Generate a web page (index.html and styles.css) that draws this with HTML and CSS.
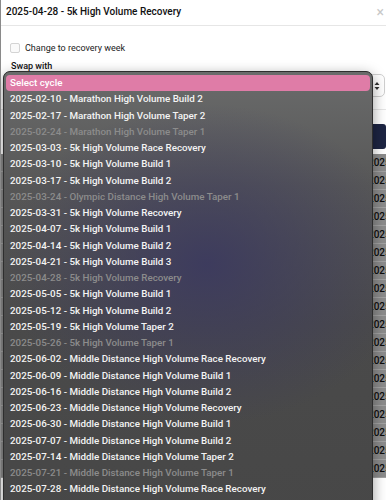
FILE: index.html
```html
<!DOCTYPE html>
<html lang="en">
<head>
  <meta charset="UTF-8">
  <meta name="viewport" content="width=device-width, initial-scale=1.0">
  <title>Edit week</title>
  <link rel="stylesheet" href="styles.css">
</head>
<body>

  <div class="modal">
    <!-- Header -->
    <div class="modal-header">
      <h1>2025-04-28 - 5k High Volume Recovery</h1>
      <span class="close">&times;</span>
    </div>

    <div class="modal-body">
      <label class="check-row">
        <span class="checkbox"></span>
        Change to recovery week
      </label>

      <div class="field-label">Swap with</div>
      <div class="select-box">
        <svg class="select-arrows" width="6" height="10" viewBox="0 0 6 10">
          <path d="M0.5 4 L3 1 L5.5 4 Z M0.5 6 L3 9 L5.5 6 Z" fill="#333"/>
        </svg>
      </div>

      <div class="divider"></div>
      <button class="save-btn">Save</button>

      <!-- Weeks table behind the popup -->
      <div class="weeks">
        <div class="week-row">2025-02-10</div>
        <div class="week-row">2025-02-17</div>
        <div class="week-row">2025-02-24</div>
        <div class="week-row">2025-03-03</div>
        <div class="week-row">2025-03-10</div>
        <div class="week-row">2025-03-17</div>
        <div class="week-row">2025-03-24</div>
        <div class="week-row">2025-03-31</div>
        <div class="week-row">2025-04-07</div>
        <div class="week-row">2025-04-14</div>
        <div class="week-row">2025-04-21</div>
        <div class="week-row">2025-04-28</div>
        <div class="week-row">2025-05-05</div>
        <div class="week-row">2025-05-12</div>
        <div class="week-row">2025-05-19</div>
        <div class="week-row">2025-05-26</div>
        <div class="week-row">2025-06-02</div>
        <div class="week-row">2025-06-09</div>
      </div>
    </div>

    <!-- Open native dropdown -->
    <ul class="dropdown">
      <li class="selected">Select cycle</li>
      <li>2025-02-10 - Marathon High Volume Build 2</li>
      <li>2025-02-17 - Marathon High Volume Taper 2</li>
      <li class="disabled">2025-02-24 - Marathon High Volume Taper 1</li>
      <li>2025-03-03 - 5k High Volume Race Recovery</li>
      <li>2025-03-10 - 5k High Volume Build 1</li>
      <li>2025-03-17 - 5k High Volume Build 2</li>
      <li class="disabled">2025-03-24 - Olympic Distance High Volume Taper 1</li>
      <li>2025-03-31 - 5k High Volume Recovery</li>
      <li>2025-04-07 - 5k High Volume Build 1</li>
      <li>2025-04-14 - 5k High Volume Build 2</li>
      <li>2025-04-21 - 5k High Volume Build 3</li>
      <li class="disabled">2025-04-28 - 5k High Volume Recovery</li>
      <li>2025-05-05 - 5k High Volume Build 1</li>
      <li>2025-05-12 - 5k High Volume Build 2</li>
      <li>2025-05-19 - 5k High Volume Taper 2</li>
      <li class="disabled">2025-05-26 - 5k High Volume Taper 1</li>
      <li>2025-06-02 - Middle Distance High Volume Race Recovery</li>
      <li>2025-06-09 - Middle Distance High Volume Build 1</li>
      <li>2025-06-16 - Middle Distance High Volume Build 2</li>
      <li>2025-06-23 - Middle Distance High Volume Recovery</li>
      <li>2025-06-30 - Middle Distance High Volume Build 1</li>
      <li>2025-07-07 - Middle Distance High Volume Build 2</li>
      <li>2025-07-14 - Middle Distance High Volume Taper 2</li>
      <li class="disabled">2025-07-21 - Middle Distance High Volume Taper 1</li>
      <li>2025-07-28 - Middle Distance High Volume Race Recovery</li>
    </ul>
  </div>

</body>
</html>
```

FILE: styles.css
```css
body {
  margin: 0;
  padding: 0;
  font-family: Roboto, "Liberation Sans", Arial, sans-serif;
  background-color: #fff;
  overflow: hidden;
}

.modal {
  position: relative;
  width: 386px;
  height: 500px;
  background-color: #fff;
  border-left: 1px solid #8a8a8a;
  box-sizing: border-box;
  overflow: hidden;
}

.modal-header {
  display: flex;
  justify-content: space-between;
  align-items: center;
  height: 23px;
  padding: 0 2px 2px 5px;
  border-bottom: 1px solid #e6e6e6;
}

.modal-header h1 {
  margin: 0;
  font-size: 10px;
  font-weight: 500;
  color: #111;
}

.close {
  font-size: 14px;
  color: #c8c8c8;
  line-height: 1;
}

.modal-body {
  padding: 15px 0 0 9px;
}

.check-row {
  display: flex;
  align-items: center;
  gap: 5px;
  font-size: 9px;
  color: #1a1a1a;
  height: 14px;
}

.checkbox {
  width: 8px;
  height: 8px;
  border: 1px solid #d4d4d4;
  border-radius: 2px;
  background-color: #fafafa;
}

.field-label {
  margin-top: 6px;
  margin-left: 1px;
  font-size: 9px;
  font-weight: 500;
  color: #111;
  height: 10px;
}

.select-box {
  display: flex;
  justify-content: flex-end;
  align-items: center;
  margin-top: 3px;
  height: 23px;
  border: 1px solid #d0d0d0;
  border-radius: 5px;
  padding: 0 4px 0 6px;
  box-sizing: border-box;
  margin-right: 1px;
}

.select-arrows {
  display: block;
}

.divider {
  margin: 12px 0 0 -9px;
  border-top: 1px solid #e6e6e6;
}

.save-btn {
  display: block;
  margin: 14px 0 0 auto;
  width: 60px;
  height: 25px;
  border: none;
  border-radius: 3px;
  background-color: #1d2543;
  color: #fff;
  font-size: 10px;
}

.weeks {
  margin-top: 5px;
  margin-left: -9px;
  background-color: #8c8c8c;
}

.week-row {
  height: 17px;
  line-height: 17px;
  border-bottom: 1px solid #a3a3a3;
  padding-left: 367px;
  font-size: 10px;
  font-weight: 500;
  color: #0d0d0d;
  white-space: nowrap;
}

.dropdown {
  position: absolute;
  left: 2px;
  top: 71px;
  width: 370px;
  height: 460px;
  margin: 0;
  padding: 3px 2px;
  box-sizing: border-box;
  list-style: none;
  border: 1px solid #2e2e2e;
  border-radius: 7px;
  background-color: #484848;
  background-image:
    radial-gradient(ellipse 55% 35% at 55% 42%, rgba(58, 56, 96, 0.85), rgba(58, 56, 96, 0) 100%),
    linear-gradient(#6a6b6b 0%, #575757 25%, #4a4a4a 55%, #474747 100%);
  box-shadow: 0 4px 14px rgba(0, 0, 0, 0.4);
}

.dropdown li {
  height: 16.25px;
  line-height: 16.25px;
  padding-left: 4px;
  font-size: 9.8px;
  font-weight: 500;
  color: #f4f4f4;
  white-space: nowrap;
  overflow: hidden;
}

.dropdown li.selected {
  background-color: #df7ca7;
  border-radius: 4px;
  color: #fff;
}

.dropdown li.disabled {
  color: #8c8c8c;
}
```
